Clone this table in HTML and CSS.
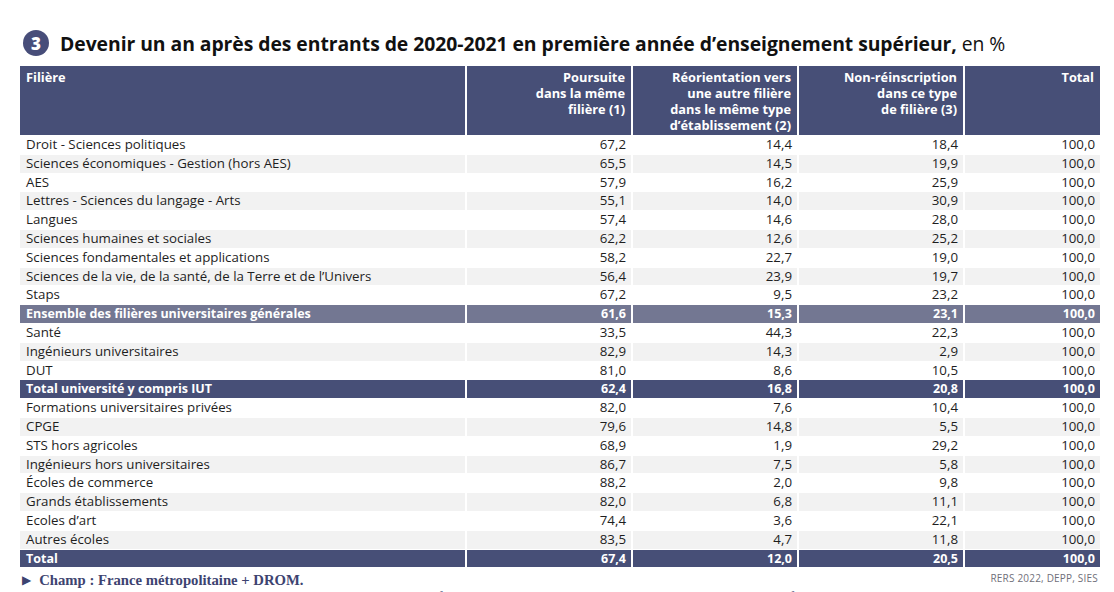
FILE: index.html
```html
<!DOCTYPE html>
<html lang="fr">
<head>
<meta charset="utf-8">
<title>Devenir un an après</title>
<link rel="stylesheet" href="styles.css">
</head>
<body>
<div class="page">
  <h1 class="title"><span class="num">3</span><span class="title-text"><b>Devenir un an après des entrants de 2020-2021 en première année d’enseignement supérieur,</b> en %</span></h1>
  <table class="data">
    <colgroup>
      <col class="c-name"><col class="c-num"><col class="c-num"><col class="c-num"><col class="c-tot">
    </colgroup>
    <thead>
      <tr>
        <th class="left">Filière</th>
        <th>Poursuite<br>dans la même<br>filière (1)</th>
        <th>Réorientation vers<br>une autre filière<br>dans le même type<br>d’établissement (2)</th>
        <th>Non-réinscription<br>dans ce type<br>de filière (3)</th>
        <th>Total</th>
      </tr>
    </thead>
    <tbody>
      <tr><td>Droit - Sciences politiques</td><td>67,2</td><td>14,4</td><td>18,4</td><td>100,0</td></tr>
      <tr class="alt"><td>Sciences économiques - Gestion (hors AES)</td><td>65,5</td><td>14,5</td><td>19,9</td><td>100,0</td></tr>
      <tr><td>AES</td><td>57,9</td><td>16,2</td><td>25,9</td><td>100,0</td></tr>
      <tr class="alt"><td>Lettres - Sciences du langage - Arts</td><td>55,1</td><td>14,0</td><td>30,9</td><td>100,0</td></tr>
      <tr><td>Langues</td><td>57,4</td><td>14,6</td><td>28,0</td><td>100,0</td></tr>
      <tr class="alt"><td>Sciences humaines et sociales</td><td>62,2</td><td>12,6</td><td>25,2</td><td>100,0</td></tr>
      <tr><td>Sciences fondamentales et applications</td><td>58,2</td><td>22,7</td><td>19,0</td><td>100,0</td></tr>
      <tr class="alt"><td>Sciences de la vie, de la santé, de la Terre et de l’Univers</td><td>56,4</td><td>23,9</td><td>19,7</td><td>100,0</td></tr>
      <tr><td>Staps</td><td>67,2</td><td>9,5</td><td>23,2</td><td>100,0</td></tr>
      <tr class="sub"><td>Ensemble des filières universitaires générales</td><td>61,6</td><td>15,3</td><td>23,1</td><td>100,0</td></tr>
      <tr><td>Santé</td><td>33,5</td><td>44,3</td><td>22,3</td><td>100,0</td></tr>
      <tr class="alt"><td>Ingénieurs universitaires</td><td>82,9</td><td>14,3</td><td>2,9</td><td>100,0</td></tr>
      <tr><td>DUT</td><td>81,0</td><td>8,6</td><td>10,5</td><td>100,0</td></tr>
      <tr class="tot"><td>Total université y compris IUT</td><td>62,4</td><td>16,8</td><td>20,8</td><td>100,0</td></tr>
      <tr><td>Formations universitaires privées</td><td>82,0</td><td>7,6</td><td>10,4</td><td>100,0</td></tr>
      <tr class="alt"><td>CPGE</td><td>79,6</td><td>14,8</td><td>5,5</td><td>100,0</td></tr>
      <tr><td>STS hors agricoles</td><td>68,9</td><td>1,9</td><td>29,2</td><td>100,0</td></tr>
      <tr class="alt"><td>Ingénieurs hors universitaires</td><td>86,7</td><td>7,5</td><td>5,8</td><td>100,0</td></tr>
      <tr><td>Écoles de commerce</td><td>88,2</td><td>2,0</td><td>9,8</td><td>100,0</td></tr>
      <tr class="alt"><td>Grands établissements</td><td>82,0</td><td>6,8</td><td>11,1</td><td>100,0</td></tr>
      <tr><td>Ecoles d’art</td><td>74,4</td><td>3,6</td><td>22,1</td><td>100,0</td></tr>
      <tr class="alt"><td>Autres écoles</td><td>83,5</td><td>4,7</td><td>11,8</td><td>100,0</td></tr>
      <tr class="tot"><td>Total</td><td>67,4</td><td>12,0</td><td>20,5</td><td>100,0</td></tr>
    </tbody>
  </table>
  <div class="foot">
    <div class="notes">
      <p class="champ"><span class="arrow">▶</span><span>Champ : France métropolitaine + DROM.</span></p>
      <p class="lecture">Lecture : 67,2 % des entrants de 2020-2021 en première année de la filière Droit - Sciences politiques poursuivent dans la même filière l’année suivante.</p>
    </div>
    <div class="source">RERS 2022, DEPP, SIES</div>
  </div>
</div>
</body>
</html>
```
FILE: styles.css
```css
html, body {
  margin: 0;
  padding: 0;
  background: #ffffff;
  overflow: hidden;
}
.page {
  width: 1114px;
  height: 592px;
  overflow: hidden;
  font-family: "Open Sans", "Lato", sans-serif;
  color: #1e1e1e;
}
.title {
  margin: 0 0 10px 0;
  padding: 30px 0 0 23px;
  height: 26px;
  display: flex;
  align-items: center;
  gap: 11px;
  font-size: 19.35px;
  font-weight: 400;
  color: #111111;
  box-sizing: content-box;
  letter-spacing: -0.05px;
  white-space: nowrap;
}
.title .num {
  width: 26px;
  height: 26px;
  border-radius: 50%;
  background: #474d79;
  color: #ffffff;
  font-weight: 800;
  font-size: 17px;
  display: flex;
  align-items: center;
  justify-content: center;
  flex: none;
}
.title b {
  font-weight: 700;
}
.data {
  margin-left: 20px;
  width: 1080px;
  border-collapse: collapse;
  table-layout: fixed;
  font-size: 13.3px;
}
.c-name { width: 446px; }
.c-num { width: 166px; }
.c-tot { width: 136px; }
.data th {
  background: #474f77;
  color: #ffffff;
  font-weight: 700;
  font-size: 12.8px;
  line-height: 16px;
  text-align: right;
  vertical-align: top;
  padding: 3px 6px 2px 6px;
  height: 64px;
  border-left: 2px solid #ffffff;
  border-bottom: 1px solid #ffffff;
}
.data th.left {
  text-align: left;
  border-left: none;
}
.data td {
  line-height: 17.8px;
  height: 17.8px;
  padding: 0 5px 0 6px;
  text-align: right;
  white-space: nowrap;
  border-left: 2px solid #ffffff;
  border-bottom: 1px solid #ffffff;
}
.data td:first-child {
  text-align: left;
  border-left: none;
}
.data tr.alt td {
  background: #f2f2f2;
}
.data tr.sub td {
  background: #737792;
  color: #ffffff;
  font-weight: 700;
  font-size: 12.5px;
}
.data tr.tot td {
  background: #474f77;
  color: #ffffff;
  font-weight: 700;
  font-size: 12.5px;
}
.foot {
  display: flex;
  justify-content: space-between;
  align-items: flex-start;
  width: 1080px;
  margin-left: 20px;
  padding-top: 4px;
}
.notes p {
  margin: 0;
  font-family: "Liberation Serif", "DejaVu Serif", serif;
  color: #3d4370;
}
.champ {
  font-size: 14.7px;
  font-weight: 700;
  line-height: 17px;
  padding-left: 2px;
  display: flex;
  align-items: center;
  gap: 8px;
}
.arrow {
  font-size: 12px;
}
.lecture {
  font-size: 14.5px;
  line-height: 16px;
  padding-left: 20px;
  white-space: nowrap;
}
.source {
  font-size: 10px;
  color: #6f6f7a;
  padding-right: 2px;
  line-height: 12px;
  letter-spacing: 0.2px;
}
```
